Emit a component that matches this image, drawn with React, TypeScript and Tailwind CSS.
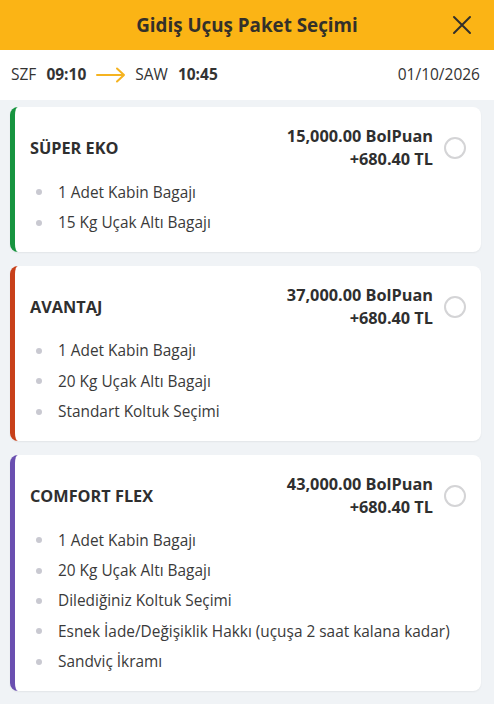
import React from 'react';

interface Paket {
  id: string;
  name: string;
  points: string;
  cash: string;
  accent: string;
  features: string[];
}

const paketler: Paket[] = [
  {
    id: 'super-eko',
    name: 'SÜPER EKO',
    points: '15,000.00 BolPuan',
    cash: '+680.40 TL',
    accent: 'border-l-[#17943f]',
    features: ['1 Adet Kabin Bagajı', '15 Kg Uçak Altı Bagajı'],
  },
  {
    id: 'avantaj',
    name: 'AVANTAJ',
    points: '37,000.00 BolPuan',
    cash: '+680.40 TL',
    accent: 'border-l-[#c8401a]',
    features: ['1 Adet Kabin Bagajı', '20 Kg Uçak Altı Bagajı', 'Standart Koltuk Seçimi'],
  },
  {
    id: 'comfort-flex',
    name: 'COMFORT FLEX',
    points: '43,000.00 BolPuan',
    cash: '+680.40 TL',
    accent: 'border-l-[#6a4fb0]',
    features: [
      '1 Adet Kabin Bagajı',
      '20 Kg Uçak Altı Bagajı',
      'Dilediğiniz Koltuk Seçimi',
      'Esnek İade/Değişiklik Hakkı (uçuşa 2 saat kalana kadar)',
      'Sandviç İkramı',
    ],
  },
];

const PaketCard: React.FC<{ paket: Paket }> = ({ paket }) => (
  <div
    className={`bg-white rounded-lg border-l-[5px] ${paket.accent} shadow-[0_1px_2px_rgba(0,0,0,0.06)] pl-[15px] pr-[15px] pt-[18px] pb-[14px]`}
  >
    <div className="flex items-center">
      <div className="flex-1 text-[16.3px] font-bold text-[#2f2f2f]">{paket.name}</div>
      <div className="text-right text-[16.3px] font-bold text-[#2f2f2f] leading-[23px]">
        <div>{paket.points}</div>
        <div>{paket.cash}</div>
      </div>
      <div className="ml-[11px] w-[22px] h-[22px] rounded-full border-2 border-[#d4d4d6] shrink-0" />
    </div>
    <ul className="mt-[6px]">
      {paket.features.map((f) => (
        <li key={f} className="flex items-center h-[30.4px] text-[15.4px] text-[#3a3a3a]">
          <span className="w-[6px] h-[6px] rounded-full bg-[#c9c9d1] ml-[6px] mr-[16px] shrink-0" />
          <span className="whitespace-nowrap">{f}</span>
        </li>
      ))}
    </ul>
  </div>
);

export default function App() {
  return (
    <div
      className="w-[494px] h-[704px] overflow-hidden bg-[#f0f3f6]"
      style={{ fontFamily: '"Open Sans", "Noto Sans", sans-serif' }}
    >
      {/* Header */}
      <div className="relative h-[50px] bg-[#fbb415] flex items-center justify-center">
        <span className="text-[18.8px] font-bold text-[#33302a]">Gidiş Uçuş Paket Seçimi</span>
        <button className="absolute right-[20px] top-[13px] text-[#33302a]">
          <svg width="24" height="24" viewBox="0 0 24 24" fill="none" stroke="currentColor" strokeWidth="2" strokeLinecap="round">
            <path d="M4 4l16 16M20 4L4 20" />
          </svg>
        </button>
      </div>

      {/* Route */}
      <div className="h-[50px] bg-white flex items-center pl-[11px] pr-[14px] text-[15.5px] text-[#333]">
        <span>SZF</span>
        <span className="ml-[10px] font-bold">09:10</span>
        <svg className="ml-[10px]" width="30" height="16" viewBox="0 0 30 16" fill="none" stroke="#f5b320" strokeWidth="2" strokeLinecap="round" strokeLinejoin="round">
          <path d="M1 8h27M21 1.5L28 8l-7 6.5" />
        </svg>
        <span className="ml-[9px]">SAW</span>
        <span className="ml-[10px] font-bold">10:45</span>
        <span className="ml-auto">01/10/2026</span>
      </div>

      {/* Packages */}
      <div className="flex flex-col gap-[14px] pt-[7px] pl-[10px] pr-[13px]">
        {paketler.map((p) => (
          <PaketCard key={p.id} paket={p} />
        ))}
      </div>
    </div>
  );
}
